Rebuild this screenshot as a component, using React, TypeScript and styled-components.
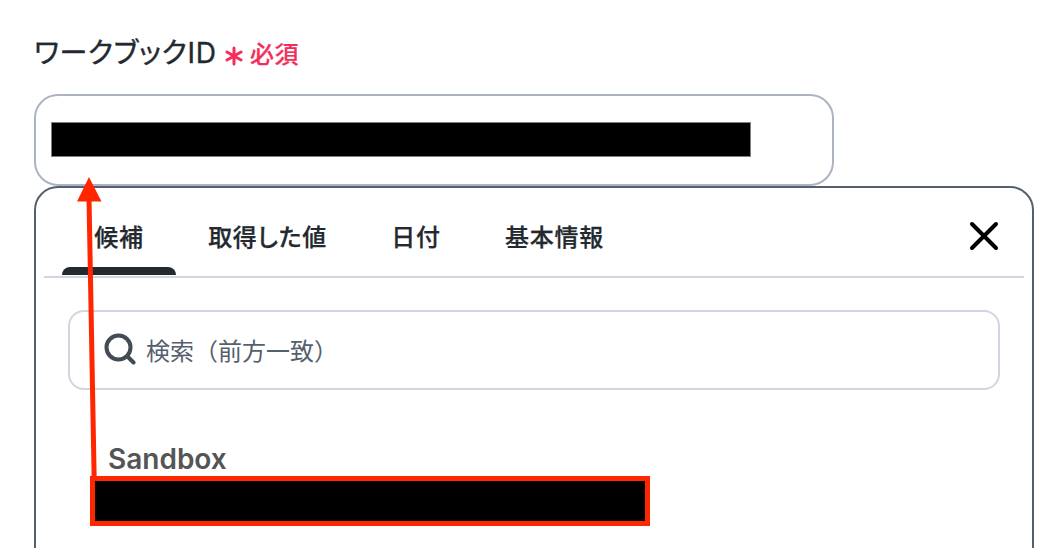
import { useState } from "react";
import styled, { createGlobalStyle } from "styled-components";

const GlobalStyle = createGlobalStyle`
  * {
    box-sizing: border-box;
  }
  body {
    margin: 0;
    background-color: #fff;
    font-family: "Inter", "Noto Sans CJK JP", sans-serif;
    color: #23292f;
    overflow: hidden;
  }
`;

const Container = styled.div`
  position: relative;
  width: 1064px;
  height: 548px;
  padding: 32px 30px 0 34px;
  overflow: hidden;
`;

const Label = styled.label`
  display: flex;
  align-items: center;
  height: 42px;
  margin-bottom: 20px;
  font-family: "Inter", "Noto Sans CJK JP", sans-serif;
  font-size: 28px;
  font-weight: 400;
  font-feature-settings: "palt";
  line-height: 40px;
  white-space: nowrap;
`;

const LabelText = styled.span`
  width: 191px;
  letter-spacing: 0.7px;
  -webkit-text-stroke: 0.4px currentColor;
`;

const Required = styled.span`
  display: flex;
  align-items: center;
  padding-top: 3px;
  gap: 7px;
  color: #f42e5b;
  font-size: 24px;
  font-weight: 500;
  letter-spacing: 0.5px;
  -webkit-text-stroke: 0.2px currentColor;
  svg {
    margin-top: 3px;
  }
`;

const Field = styled.div`
  display: flex;
  align-items: center;
  width: 800px;
  height: 92px;
  padding: 0 15px 1px;
  border: 2px solid #abb4c0;
  border-radius: 24px;
`;

const FieldValue = styled.div`
  width: 700px;
  height: 35px;
  border: 1px solid #808080;
  background-color: #000;
`;

const Panel = styled.section`
  width: 1000px;
  height: 400px;
  border: 2px solid #56606c;
  border-radius: 24px;
  background-color: #fff;
`;

const PanelHeader = styled.header`
  display: flex;
  align-items: flex-start;
  height: 90px;
  margin: 0 8px;
  padding-left: 18px;
  border-bottom: 2px solid #d0d6df;
`;

const Tab = styled.button<{ $width: number; $active: boolean }>`
  display: flex;
  flex-direction: column;
  align-items: center;
  width: ${(props) => props.$width}px;
  height: 87px;
  padding: 30px 0 0;
  border: none;
  background: none;
  color: #23292f;
  font-family: "Noto Sans CJK JP", sans-serif;
  font-size: 24px;
  font-weight: 500;
  line-height: 36px;
  font-feature-settings: "palt";
  letter-spacing: 0.7px;
  white-space: nowrap;
  -webkit-text-stroke: 0.25px currentColor;
  &::after {
    content: "";
    width: 100%;
    height: 8px;
    margin-top: auto;
    border-radius: 8px 8px 0 0;
    background-color: ${(props) => (props.$active ? "#23292f" : "transparent")};
  }
`;

const CloseButton = styled.button`
  display: flex;
  margin: 32px 24px 0 auto;
  padding: 0;
  border: none;
  background: none;
`;

const SearchBox = styled.div`
  display: flex;
  align-items: center;
  height: 80px;
  margin: 32px 32px 0;
  padding: 0 34px;
  gap: 10px;
  border: 2px solid #d0d6df;
  border-radius: 16px;
`;

const Placeholder = styled.span`
  color: #56606c;
  font-family: "Noto Sans CJK JP", sans-serif;
  font-size: 24px;
  line-height: 36px;
`;

const GroupTitle = styled.h3`
  margin: 52px 0 0 72px;
  color: #555;
  font-size: 28px;
  font-weight: 600;
  line-height: 34px;
`;

const Candidate = styled.div`
  width: 560px;
  height: 50px;
  margin: 0 0 0 54px;
  border: 5px solid #ff2600;
  background-color: #000;
`;

// 候補から入力欄への矢印
const Arrow = styled.svg`
  position: absolute;
  top: 0;
  left: 0;
  pointer-events: none;
`;

const tabs = [
  { name: "候補", width: 114 },
  { name: "取得した値", width: 183 },
  { name: "日付", width: 114 },
  { name: "基本情報", width: 163 },
];

function App() {
  const [current, setCurrent] = useState("候補");
  return (
    <Container>
      <GlobalStyle />
      <Label>
        <LabelText>ワークブックID</LabelText>
        <Required>
          <svg width="18" height="20" viewBox="0 0 18 20" fill="none">
            <path
              d="M9 2v16M2 6l14 8M2 14l14-8"
              stroke="currentColor"
              strokeWidth="3"
              strokeLinecap="round"
            />
          </svg>
          必須
        </Required>
      </Label>
      <Field>
        <FieldValue />
      </Field>
      <Panel>
        <PanelHeader>
          {tabs.map((tab) => (
            <Tab
              key={tab.name}
              $width={tab.width}
              $active={tab.name === current}
              onClick={() => setCurrent(tab.name)}
            >
              {tab.name}
            </Tab>
          ))}
          <CloseButton aria-label="閉じる">
            <svg width="32" height="32" viewBox="0 0 32 32" fill="none">
              <path
                d="M4 4l24 24M28 4L4 28"
                stroke="#000"
                strokeWidth="4"
                strokeLinecap="round"
              />
            </svg>
          </CloseButton>
        </PanelHeader>
        <SearchBox>
          <svg width="32" height="34" viewBox="0 0 32 34" fill="none">
            <circle cx="14.500" cy="14.500" r="12" stroke="#434b55" strokeWidth="4" />
            <path
              d="M23.500 23.500l6 6"
              stroke="#434b55"
              strokeWidth="4"
              strokeLinecap="round"
            />
          </svg>
          <Placeholder>検索（前方一致）</Placeholder>
        </SearchBox>
        <GroupTitle>Sandbox</GroupTitle>
        <Candidate />
      </Panel>
      <Arrow width="1064" height="548" viewBox="0 0 1064 548">
        <path d="M94.200 480L89 198" stroke="#ff2600" strokeWidth="5" />
        <path d="M89 177l12.500 24.500h-24.500z" fill="#ff2600" />
      </Arrow>
    </Container>
  );
}

export default App;
